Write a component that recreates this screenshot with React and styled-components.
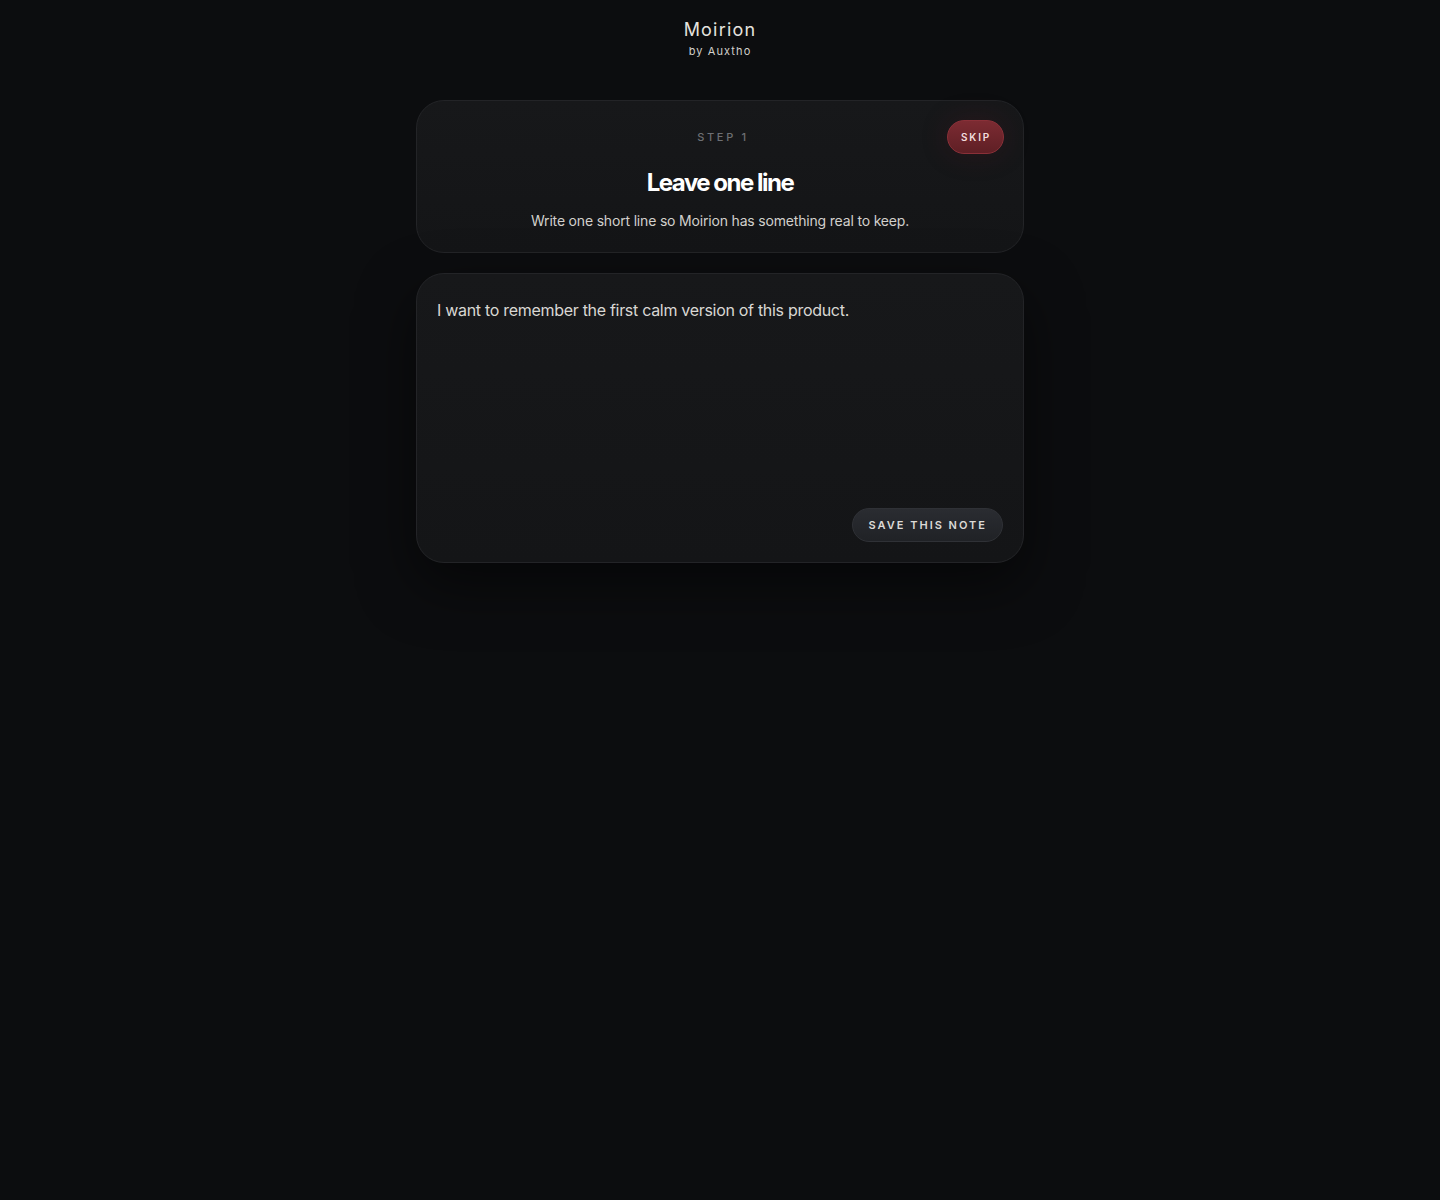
import React from "react";
import styled, { createGlobalStyle } from "styled-components";

const Global = createGlobalStyle`
  html, body {
    margin: 0;
    padding: 0;
    background: #0c0d0f;
    min-height: 100%;
  }

  body {
    font-family: Inter, "Noto Sans", sans-serif;
    color: #e6e4e1;
    -webkit-font-smoothing: antialiased;
  }
`;

const Page = styled.div`
  min-height: 1200px;

  display: flex;
  flex-direction: column;
  align-items: center;

  padding-top: 19px;
  box-sizing: border-box;
`;

const Brand = styled.header`
  display: flex;
  flex-direction: column;
  align-items: center;
  gap: 3px;

  margin-bottom: 42px;
`;

const BrandName = styled.div`
  font-size: 18px;
  line-height: 22px;
  letter-spacing: 1.2px;
  color: #e4e2df;
`;

const BrandBy = styled.div`
  font-size: 11px;
  line-height: 14px;
  letter-spacing: 1.1px;
  color: #d2d0cc;
`;

const Stack = styled.main`
  width: 608px;

  display: flex;
  flex-direction: column;
  gap: 20px;
`;

const Card = styled.section`
  position: relative;

  background: linear-gradient(180deg, #17181a 0%, #141517 100%);
  border: 1px solid #232427;
  border-radius: 28px;

  box-sizing: border-box;
  box-shadow: ${(p) =>
    p.$lifted ? "0 22px 56px rgba(0, 0, 0, 0.5)" : "none"};
`;

const Intro = styled(Card)`
  padding: 29px 24px 21px;

  display: flex;
  flex-direction: column;
  align-items: center;
`;

const Step = styled.div`
  font-size: 11px;
  line-height: 14px;
  font-weight: 500;
  letter-spacing: 2.7px;
  color: #6d6f73;
  padding-left: 6px;
`;

const Title = styled.h1`
  margin: 24px 0 0;

  font-size: 24px;
  line-height: 30px;
  font-weight: 700;
  letter-spacing: -1.5px;
  color: #ffffff;
`;

const Lead = styled.p`
  margin: 13px 0 0;

  font-size: 14px;
  line-height: 20px;
  letter-spacing: -0.18px;
  color: #d2d0cc;
`;

const Skip = styled.button`
  position: absolute;
  top: 19px;
  right: 19px;

  height: 34px;
  padding: 0 12px 0 13px;

  border: 1px solid #8a3038;
  border-radius: 999px;
  background: linear-gradient(180deg, #7c2b32 0%, #5f1f25 100%);
  box-shadow: 0 0 28px rgba(110, 25, 35, 0.22);

  font-family: inherit;
  font-size: 10px;
  font-weight: 600;
  letter-spacing: 1.8px;
  color: #f1dcdc;
  cursor: pointer;
`;

const Composer = styled(Card)`
  height: 290px;
  padding: 24px 20px 20px;

  display: flex;
  flex-direction: column;
`;

const Note = styled.textarea`
  flex: 1;

  margin: 0;
  padding: 0;

  border: none;
  outline: none;
  resize: none;
  background: transparent;

  font-family: inherit;
  font-size: 16px;
  line-height: 24px;
  letter-spacing: -0.3px;
  color: #d9d7d3;
`;

const Actions = styled.div`
  display: flex;
  justify-content: flex-end;
`;

const Save = styled.button`
  height: 34px;
  padding: 0 15px 0 16px;

  border: 1px solid #2f3136;
  border-radius: 999px;
  background: linear-gradient(180deg, #2a2c31 0%, #202226 100%);

  font-family: inherit;
  font-size: 11px;
  font-weight: 600;
  letter-spacing: 2px;
  color: #dcdad6;
  cursor: pointer;
`;

export default function App() {
  return (
    <>
      <Global />
      <Page>
        <Brand>
          <BrandName>Moirion</BrandName>
          <BrandBy>by Auxtho</BrandBy>
        </Brand>
        <Stack>
          <Intro>
            <Step>STEP 1</Step>
            <Title>Leave one line</Title>
            <Lead>
              Write one short line so Moirion has something real to keep.
            </Lead>
            <Skip>SKIP</Skip>
          </Intro>
          <Composer $lifted>
            <Note
              defaultValue="I want to remember the first calm version of this product."
              spellCheck={false}
            />
            <Actions>
              <Save>SAVE THIS NOTE</Save>
            </Actions>
          </Composer>
        </Stack>
      </Page>
    </>
  );
}
